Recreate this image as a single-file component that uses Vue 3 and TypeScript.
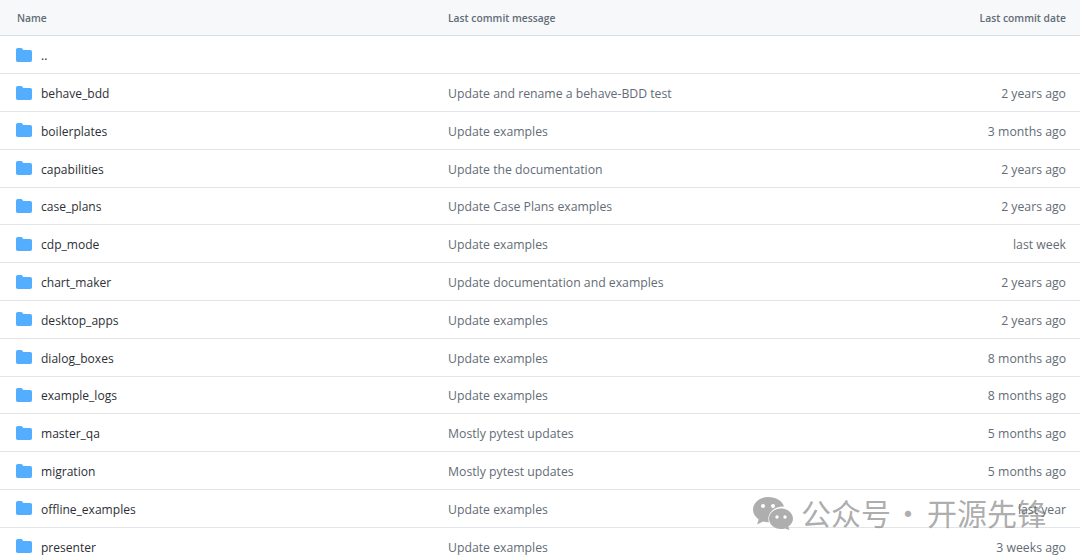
<script setup lang="ts">
interface Row { name: string; msg: string; date: string }
const rows: Row[] = [
  { name: '..', msg: '', date: '' },
  { name: 'behave_bdd', msg: 'Update and rename a behave-BDD test', date: '2 years ago' },
  { name: 'boilerplates', msg: 'Update examples', date: '3 months ago' },
  { name: 'capabilities', msg: 'Update the documentation', date: '2 years ago' },
  { name: 'case_plans', msg: 'Update Case Plans examples', date: '2 years ago' },
  { name: 'cdp_mode', msg: 'Update examples', date: 'last week' },
  { name: 'chart_maker', msg: 'Update documentation and examples', date: '2 years ago' },
  { name: 'desktop_apps', msg: 'Update examples', date: '2 years ago' },
  { name: 'dialog_boxes', msg: 'Update examples', date: '8 months ago' },
  { name: 'example_logs', msg: 'Update examples', date: '8 months ago' },
  { name: 'master_qa', msg: 'Mostly pytest updates', date: '5 months ago' },
  { name: 'migration', msg: 'Mostly pytest updates', date: '5 months ago' },
  { name: 'offline_examples', msg: 'Update examples', date: 'last year' },
  { name: 'presenter', msg: 'Update examples', date: '3 weeks ago' }
]
</script>

<template>
  <div class="page">
    <div class="table">
      <div class="row head">
        <div class="name">Name</div>
        <div class="msg">Last commit message</div>
        <div class="date">Last commit date</div>
      </div>
      <div v-for="r in rows" :key="r.name" class="row">
        <div class="name">
          <svg class="folder" width="16" height="16" viewBox="0 0 16 16" aria-hidden="true">
            <path fill="#54aeff" d="M1.75 1A1.75 1.75 0 0 0 0 2.75v10.5C0 14.216.784 15 1.75 15h12.5A1.75 1.75 0 0 0 16 13.25v-8.5A1.75 1.75 0 0 0 14.25 3H7.5a.25.25 0 0 1-.2-.1l-.9-1.2C6.07 1.26 5.55 1 5 1H1.75Z" />
          </svg>
          <span class="label">{{ r.name }}</span>
        </div>
        <div class="msg">{{ r.msg }}</div>
        <div class="date">{{ r.date }}</div>
      </div>
    </div>
    <div class="mark">
      <svg class="wechat" width="42" height="34" viewBox="0 0 42 34" aria-hidden="true">
        <path fill="#aeaeae" d="M16 1C7.700 1 1 6.600 1 13.600c0 4 2.200 7.500 5.700 9.800L5 28.600l6.100-3.100c1.600.4 3.200.7 4.900.7h.9a11.600 11.600 0 0 1-.5-3.300c0-6.900 6.600-12.500 14.700-12.500h.9C30.600 5 24 1 16 1Z" />
        <path fill="#aeaeae" d="M41 22.800c0-5.700-5.500-10.300-12-10.300s-12 4.600-12 10.300S22.500 33 29 33c1.400 0 2.700-.2 3.900-.6l4.600 1.600-1.200-3.400c2.900-1.900 4.700-4.700 4.700-7.800Z" />
        <circle cx="11" cy="10" r="2" fill="#fff" />
        <circle cx="21" cy="10" r="2" fill="#fff" />
        <circle cx="25" cy="21" r="1.700" fill="#fff" />
        <circle cx="33" cy="21" r="1.700" fill="#fff" />
      </svg>
      <span class="cjk">公众号</span>
      <span class="cjk dot">·</span>
      <span class="cjk">开源先锋</span>
    </div>
  </div>
</template>

<style>
html, body { margin: 0; background: #fff; overflow: hidden; }
</style>

<style scoped>
.page {
  position: relative;
  width: 1080px;
  height: 557px;
  overflow: hidden;
  font-family: "Open Sans", "Noto Sans", sans-serif;
  font-size: 12.25px;
  color: #636c76;
}
.table {
  display: flex;
  flex-direction: column;
}
.row {
  display: grid;
  grid-template-columns: 432px 1fr 200px;
  align-items: center;
  box-sizing: border-box;
  height: 37.8px;
  padding: 2px 14px 0 16px;
  border-bottom: 1px solid #e1e5ea;
}
.head {
  height: 36.4px;
  background: #f6f8fa;
  border-bottom-color: #d8dee6;
  font-size: 10.300px;
  font-weight: 600;
  padding-top: 1px;
}
.name {
  display: flex;
  align-items: center;
  gap: 9px;
  color: #2c3036;
}
.label { font-size: 12.050px; }
.head .name { color: #636c76; padding-left: 1px; }
.folder { flex: none; margin-top: -2px; }
.date { text-align: right; }
.mark {
  position: absolute;
  left: 752px;
  top: 496px;
  display: flex;
  align-items: center;
  color: rgba(120, 120, 120, 0.62);
  font-family: "Noto Sans CJK SC", sans-serif;
  font-size: 30px;
  line-height: 34px;
  white-space: nowrap;
}
.wechat { margin-right: 7px; }
.cjk { margin-top: -3px; }
.dot { margin-left: 2px; margin-right: 4px; }
</style>
